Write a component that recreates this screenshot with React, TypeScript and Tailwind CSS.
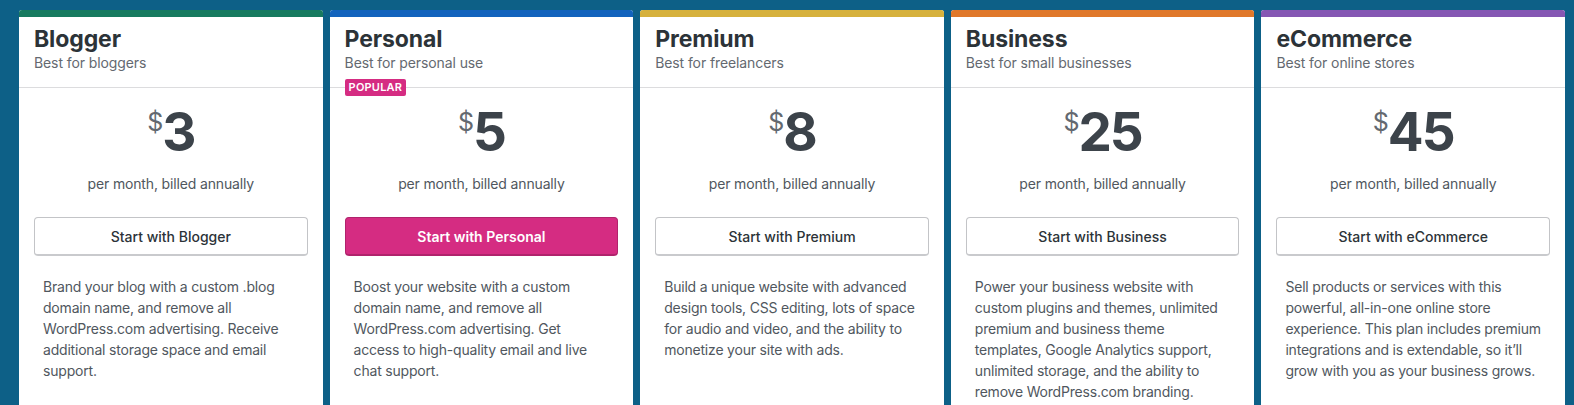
const plans = [
  {
    name: "Blogger",
    tagline: "Best for bloggers",
    price: 3,
    bar: "bg-[#177a5f]",
    popular: false,
    text: "Brand your blog with a custom .blog domain name, and remove all WordPress.com advertising. Receive additional storage space and email support.",
  },
  {
    name: "Personal",
    tagline: "Best for personal use",
    price: 5,
    bar: "bg-[#1263bd]",
    popular: true,
    text: "Boost your website with a custom domain name, and remove all WordPress.com advertising. Get access to high-quality email and live chat support.",
  },
  {
    name: "Premium",
    tagline: "Best for freelancers",
    price: 8,
    bar: "bg-[#d6b13d]",
    popular: false,
    text: "Build a unique website with advanced design tools, CSS editing, lots of space for audio and video, and the ability to monetize your site with ads.",
  },
  {
    name: "Business",
    tagline: "Best for small businesses",
    price: 25,
    bar: "bg-[#e0782a]",
    popular: false,
    text: "Power your business website with custom plugins and themes, unlimited premium and business theme templates, Google Analytics support, unlimited storage, and the ability to remove WordPress.com branding.",
  },
  {
    name: "eCommerce",
    tagline: "Best for online stores",
    price: 45,
    bar: "bg-[#8557b3]",
    popular: false,
    text: "Sell products or services with this powerful, all-in-one online store experience. This plan includes premium integrations and is extendable, so it\u2019ll grow with you as your business grows.",
  },
];

type Plan = (typeof plans)[number];

function PlanCard({ plan }: { plan: Plan }) {
  return (
    <div className="bg-white rounded-t-[3px] overflow-hidden min-h-[420px]">
      <div className={`h-[7px] ${plan.bar}`} />

      {/* Header */}
      <div className="relative px-[15px] pt-[8px] pb-[15px] border-b border-[#dcdcde]">
        <h2 className="text-[23px] leading-[28px] font-bold text-[#2c3338] tracking-[-0.1px]">{plan.name}</h2>
        <p className="text-[14px] leading-[18px] text-[#646970] mt-[1px] tracking-[-0.1px]">{plan.tagline}</p>
        {plan.popular && (
          <span className="absolute left-[15px] bottom-[-9px] h-[17px] px-[4px] rounded-[2px] bg-[#d52c82] text-white text-[11px] leading-[17px] font-semibold tracking-[0.2px]">
            POPULAR
          </span>
        )}
      </div>

      {/* Price */}
      <div className="flex justify-center items-start pt-[18px] text-[#3c434a]">
        <span className="text-[25px] leading-[28px] text-[#646970] mt-[2px] mr-[-1px]">$</span>
        <span className="text-[53px] leading-[53px] font-bold tracking-[-2px]">{plan.price}</span>
      </div>
      <p className="mt-[16px] text-center text-[14px] leading-[18px] text-[#50575e] tracking-[-0.15px]">
        per month, billed annually
      </p>

      {/* Action */}
      <div className="px-[15px] mt-[24px]">
        {plan.popular ? (
          <button className="w-full h-[39px] rounded-[4px] bg-[#d52c82] border border-[#b0236c] border-b-2 text-white text-[14px] font-semibold">
            Start with {plan.name}
          </button>
        ) : (
          <button className="w-full h-[39px] rounded-[4px] bg-white border border-[#c3c4c7] border-b-2 border-b-[#c9cacd] text-[#2c3338] text-[14px] font-medium">
            Start with {plan.name}
          </button>
        )}
      </div>

      <p className="px-[24px] mt-[20px] text-[14px] leading-[21px] text-[#50575e] tracking-[-0.2px]">{plan.text}</p>
    </div>
  );
}

export default function App() {
  return (
    <div
      className="h-[405px] overflow-hidden bg-[#0d6087] pt-[10px] pl-[19px] pr-[9px]"
      style={{ fontFamily: "Inter, 'Noto Sans', sans-serif" }}
    >
      <div className="grid grid-cols-5 gap-[7px]">
        {plans.map((plan) => (
          <PlanCard key={plan.name} plan={plan} />
        ))}
      </div>
    </div>
  );
}
